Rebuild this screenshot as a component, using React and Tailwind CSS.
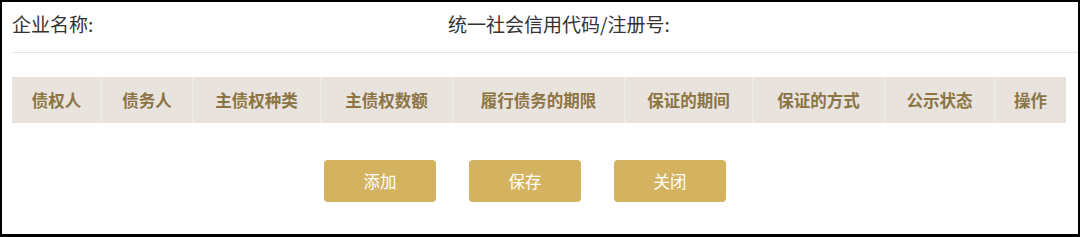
export default function App() {
  const cols = [
    ["债权人", 90],
    ["债务人", 91],
    ["主债权种类", 128],
    ["主债权数额", 132],
    ["履行债务的期限", 172],
    ["保证的期间", 128],
    ["保证的方式", 132],
    ["公示状态", 110],
    ["操作", 71],
  ];
  return (
    <div
      className="w-[1080px] h-[237px] border-t-2 border-l-2 border-r-2 border-b-[3px] border-black bg-white overflow-hidden"
      style={{ fontFamily: '"Noto Sans CJK SC", "Noto Sans", sans-serif' }}
    >
      <div className="ml-[10px] flex items-center h-[51px] pb-[5px] border-b border-[#e6e6e6] text-[19px] text-[#333]">
        <div className="w-[436px]">企业名称:</div>
        <div>统一社会信用代码/注册号:</div>
      </div>
      <div className="ml-[10px] mt-[24px] flex h-[46px] w-[1054px] bg-[#e8e3dd]">
        {cols.map(([t, w], i) => (
          <div
            key={t}
            style={{ width: w }}
            className={`flex items-center justify-center text-[16.5px] font-bold text-[#8c7444] ${i < cols.length - 1 ? "border-r border-[#f1eee9]" : ""}`}
          >
            {t}
          </div>
        ))}
      </div>
      <div className="mt-[37px] flex gap-[33px] pl-[322px]">
        {["添加", "保存", "关闭"].map((t) => (
          <button
            key={t}
            className="w-[112px] h-[42px] rounded-[4px] bg-[#d4b360] text-white text-[16.5px]"
          >
            {t}
          </button>
        ))}
      </div>
    </div>
  );
}
